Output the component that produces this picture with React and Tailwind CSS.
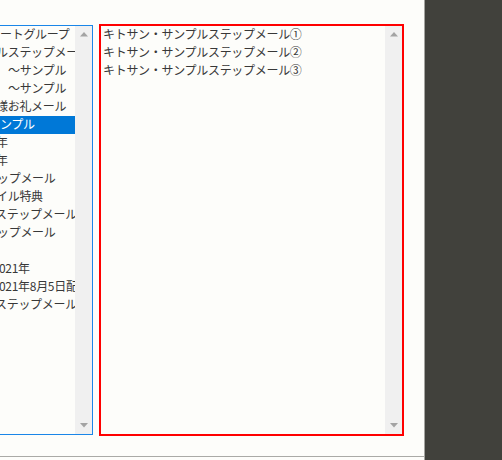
const leftItems = [
    { text: "ートグループ", cls: "" },
    { text: "ルステップメール", cls: "-ml-[4px]" },
    { text: "～サンプル", cls: "pl-[8px]" },
    { text: "～サンプル", cls: "pl-[8px]" },
    { text: "様お礼メール", cls: "-ml-[4px]" },
    { text: "ンプル", cls: "", selected: true },
    { text: "年", cls: "-ml-[4px]" },
    { text: "年", cls: "-ml-[4px]" },
    { text: "ップメール", cls: "-ml-[3px]" },
    { text: "イル特典", cls: "-ml-[4px]" },
    { text: "ステップメール", cls: "-ml-[5px]" },
    { text: "ップメール", cls: "-ml-[3px]" },
    { text: "", cls: "" },
    { text: "021年", cls: "-ml-[1px]" },
    { text: "021年8月5日配信", cls: "-ml-[1px]" },
    { text: "ステップメール", cls: "-ml-[5px]" },
];

const rightItems = [
    "キトサン・サンプルステップメール①",
    "キトサン・サンプルステップメール②",
    "キトサン・サンプルステップメール③",
];

const Arrow = ({ down }) => (
    <svg width="8" height="5" viewBox="0 0 8 5">
        {down ? (
            <polygon points="0,0 8,0 4,4.5" fill="#a3a3a3" />
        ) : (
            <polygon points="0,4.5 8,4.5 4,0" fill="#a3a3a3" />
        )}
    </svg>
);

const ScrollBar = () => (
    <div className="flex w-[17px] shrink-0 flex-col justify-between bg-[#f0f0f0]">
        <div className="flex h-[17px] items-center justify-center">
            <Arrow />
        </div>
        <div className="flex h-[17px] items-center justify-center">
            <Arrow down />
        </div>
    </div>
);

const App = () => {
    return (
        <div className="flex h-[460px] w-[502px] overflow-hidden bg-[#fdfdfa] font-['Noto_Sans_CJK_JP',sans-serif] text-[12px] tracking-[-0.3px] text-[#383838]">
            <div className="h-[460px] w-[425px] shrink-0 border-r border-[#a4a4a0]">
                <div className="flex h-[457px] items-start gap-[6px] border-b border-[#aaaaa6] pt-[24px]">
                    {/* 左のリスト（左端は画面外） */}
                    <div className="mt-[1px] flex h-[410px] w-[93px] shrink-0 border-y border-r border-[#1a86e8]">
                        <div className="flex-1 overflow-hidden">
                            {leftItems.map((item, index) => (
                                <div
                                    key={index}
                                    className={`h-[18px] overflow-hidden whitespace-nowrap leading-[15px] ${item.selected ? 'bg-[#0078d7] text-white' : ''}`}
                                >
                                    <div className={item.cls}>{item.text}</div>
                                </div>
                            ))}
                        </div>
                        <ScrollBar />
                    </div>

                    {/* 右のリスト */}
                    <div className="flex h-[412px] w-[305px] shrink-0 border-2 border-[#ff0000]">
                        <div className="flex-1 overflow-hidden pl-[2px]">
                            {rightItems.map((text, index) => (
                                <div key={index} className="h-[18px] whitespace-nowrap leading-[15px]">
                                    {text}
                                </div>
                            ))}
                        </div>
                        <ScrollBar />
                    </div>
                </div>
            </div>
            <div className="h-[460px] flex-1 bg-[#41413c]" />
        </div>
    );
};

export default App;
